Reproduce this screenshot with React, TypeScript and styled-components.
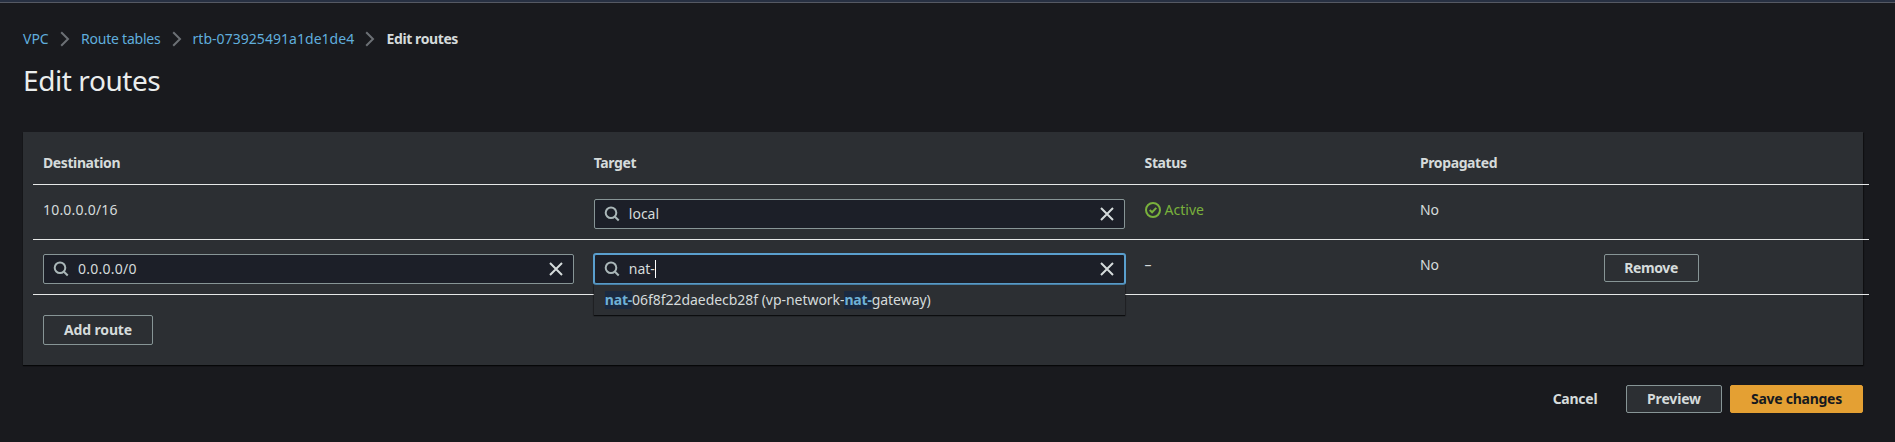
import React from 'react';
import styled, { createGlobalStyle, css } from 'styled-components';

const color = {
  page: '#191a1e',
  panel: '#2c2f33',
  field: '#1c1f28',
  border: '#879596',
  text: '#d5dbdb',
  heading: '#eaeded',
  link: '#60aedd',
  focus: '#5a9fce',
  line: '#e6e8e8',
  ok: '#79b13c',
  primary: '#e4a033',
};

const GlobalStyle = createGlobalStyle`
  * { box-sizing: border-box; }
  html, body { margin: 0; background: ${color.page}; }
  body {
    font-family: "Noto Sans", "Open Sans", sans-serif;
    font-size: 14px;
    line-height: 22px;
    color: ${color.text};
    overflow: hidden;
  }
`;

const Page = styled.div`
  height: 442px;
  background: ${color.page};
`;

const TopBar = styled.div`
  height: 3px;
  background: #273042;
  border-bottom: 1px solid #555963;
`;

const Content = styled.main`
  padding: 25px 32px 0 23px;
`;

const Breadcrumbs = styled.nav`
  display: flex;
  align-items: center;
  height: 22px;
`;

const CrumbLink = styled.a<{ $track?: number; $width: number }>`
  width: ${(p) => p.$width}px;
  color: ${color.link};
  letter-spacing: ${(p) => p.$track ?? 0}px;
  white-space: nowrap;
`;

const CrumbCurrent = styled.span`
  margin-left: 0.5px;
  font-weight: 700;
  letter-spacing: -0.4px;
`;

const CrumbArrow = styled.svg`
  width: 10px;
  height: 16px;
  margin: 0 11px;
  fill: none;
  stroke: #6c7075;
  stroke-width: 2;
`;

const Title = styled.h1`
  margin: 12px 0 0;
  height: 36px;
  font-size: 28px;
  line-height: 36px;
  font-weight: 400;
  letter-spacing: -0.42px;
  color: ${color.heading};
`;

const Panel = styled.section`
  height: 233px;
  margin-top: 34px;
  padding: 0 0 0 10px;
  background: ${color.panel};
  box-shadow: 0 1px 1px 0 #060708, 1px 1px 1px 0 rgba(0, 0, 0, 0.3);
`;

const Table = styled.div`
  width: 1836px;
`;

const rowGrid = css`
  display: grid;
  grid-template-columns: 30% 30% 15% 10% 15%;
  border-bottom: 1px solid ${color.line};
`;

const HeaderRow = styled.div`
  ${rowGrid}
  height: 53px;
  padding-top: 20px;
`;

const Row = styled.div`
  ${rowGrid}
  height: 55px;
  padding-top: 14px;
`;

const HeaderCell = styled.div`
  padding: 0 10px;
  font-weight: 700;
  letter-spacing: -0.4px;
`;

const Cell = styled.div<{ $track?: number }>`
  padding: 0 10px;
  letter-spacing: ${(p) => p.$track ?? 0}px;
`;

const FieldWrap = styled.div`
  position: relative;
  width: 531px;
`;

const Field = styled.div<{ $focused?: boolean; $track?: number }>`
  display: flex;
  align-items: center;
  height: 30px;
  padding: 0 9px;
  border: 1px solid ${(p) => (p.$focused ? color.focus : color.border)};
  border-radius: 2px;
  background: ${color.field};
  box-shadow: ${(p) => (p.$focused ? `0 0 0 1px ${color.focus}` : 'none')};
  letter-spacing: ${(p) => p.$track ?? 0}px;
`;

const FieldText = styled.span`
  margin-left: 9px;
`;

const Caret = styled.span`
  width: 1px;
  height: 18px;
  background: #ffffff;
`;

const SearchGlyph = styled.svg`
  width: 16px;
  height: 16px;
  fill: none;
  stroke: #aab7b8;
  stroke-width: 2;
`;

const ClearGlyph = styled.svg`
  width: 16px;
  height: 16px;
  margin-left: auto;
  fill: none;
  stroke: #d5dbdb;
  stroke-width: 2;
`;

const Suggestions = styled.div`
  position: absolute;
  top: 31px;
  left: 0;
  z-index: 1;
  display: flex;
  align-items: center;
  width: 100%;
  height: 30px;
  padding-left: 11px;
  background: ${color.panel};
  box-shadow: 0 1px 1px 0 #0c0d0f, 0 0 1px 1px rgba(0, 0, 0, 0.2);
  letter-spacing: -0.04px;
`;

const Match = styled.span`
  height: 18px;
  line-height: 18px;
  color: #6fb1d6;
  background: #1b2a40;
  font-weight: 700;
  letter-spacing: -0.2px;
`;

const Status = styled.span`
  display: flex;
  align-items: center;
  gap: 4px;
  color: ${color.ok};
`;

const StatusGlyph = styled.svg`
  width: 16px;
  height: 16px;
  fill: none;
  stroke: ${color.ok};
  stroke-width: 2;
`;

const Button = styled.button<{ $kind?: 'normal' | 'primary' | 'link'; $track?: number; $width: number; $tall?: boolean }>`
  display: flex;
  align-items: center;
  justify-content: center;
  width: ${(p) => p.$width}px;
  height: ${(p) => (p.$tall ? 30 : 28)}px;
  padding: 0;
  border: 1px solid ${color.border};
  border-radius: 2px;
  background: ${color.panel};
  color: ${color.text};
  font: inherit;
  font-weight: 700;
  letter-spacing: ${(p) => p.$track ?? 0}px;
  ${(p) => p.$kind === 'primary' && css`
    border-color: ${color.primary};
    background: ${color.primary};
    color: #16191f;
  `}
  ${(p) => p.$kind === 'link' && css`
    border-color: transparent;
    background: transparent;
  `}
`;

const AddRow = styled.div`
  padding: 20px 0 0 10px;
`;

const Actions = styled.footer`
  display: flex;
  justify-content: flex-end;
  gap: 8px;
  margin-top: 20px;
`;

const Arrow = () => (
  <CrumbArrow viewBox="0 0 10 16">
    <path d="M1.2 1.2 8 8l-6.8 6.8" />
  </CrumbArrow>
);

const SearchIcon = () => (
  <SearchGlyph viewBox="0 0 16 16">
    <circle cx="7" cy="6.8" r="5.3" />
    <path d="m10.7 10.5 4 4" />
  </SearchGlyph>
);

const ClearIcon = () => (
  <ClearGlyph viewBox="0 0 16 16">
    <path d="m2 2 12 12M14 2 2 14" />
  </ClearGlyph>
);

type SearchFieldProps = { value: string; focused?: boolean; track?: number; children?: React.ReactNode };

const SearchField = ({ value, focused, track, children }: SearchFieldProps) => (
  <FieldWrap>
    <Field $focused={focused} $track={track}>
      <SearchIcon />
      <FieldText>{value}</FieldText>
      {focused && <Caret />}
      <ClearIcon />
    </Field>
    {children}
  </FieldWrap>
);

export default function App() {
  return (
    <Page>
      <GlobalStyle />
      <TopBar />
      <Content>
        <Breadcrumbs>
          <CrumbLink $width={26}>VPC</CrumbLink>
          <Arrow />
          <CrumbLink $width={79.5} $track={-0.22}>Route tables</CrumbLink>
          <Arrow />
          <CrumbLink $width={161.5} $track={0.04}>rtb-073925491a1de1de4</CrumbLink>
          <Arrow />
          <CrumbCurrent>Edit routes</CrumbCurrent>
        </Breadcrumbs>
        <Title>Edit routes</Title>
        <Panel>
          <Table>
            <HeaderRow>
              <HeaderCell>Destination</HeaderCell>
              <HeaderCell>Target</HeaderCell>
              <HeaderCell>Status</HeaderCell>
              <HeaderCell>Propagated</HeaderCell>
            </HeaderRow>
            <Row>
              <Cell $track={0.2}>10.0.0.0/16</Cell>
              <Cell><SearchField value="local" /></Cell>
              <Cell>
                <Status>
                  <StatusGlyph viewBox="0 0 16 16">
                    <circle cx="8" cy="8" r="7" />
                    <path d="m4.7 8 2.4 2.3 4.2-4.4" />
                  </StatusGlyph>
                  Active
                </Status>
              </Cell>
              <Cell>No</Cell>
            </Row>
            <Row>
              <Cell><SearchField value="0.0.0.0/0" track={0.25} /></Cell>
              <Cell>
                <SearchField value="nat-" focused>
                  <Suggestions>
                    <Match>nat-</Match>
                    <span>06f8f22daedecb28f (vp-network-</span>
                    <Match>nat-</Match>
                    <span>gateway)</span>
                  </Suggestions>
                </SearchField>
              </Cell>
              <Cell>–</Cell>
              <Cell>No</Cell>
              <Cell><Button $width={95} $track={-0.4}>Remove</Button></Cell>
            </Row>
          </Table>
          <AddRow>
            <Button $width={110} $track={-0.15} $tall>Add route</Button>
          </AddRow>
        </Panel>
        <Actions>
          <Button $kind="link" $width={86} $track={-0.25}>Cancel</Button>
          <Button $width={96} $track={-0.15}>Preview</Button>
          <Button $kind="primary" $width={133} $track={-0.27}>Save changes</Button>
        </Actions>
      </Content>
    </Page>
  );
}
